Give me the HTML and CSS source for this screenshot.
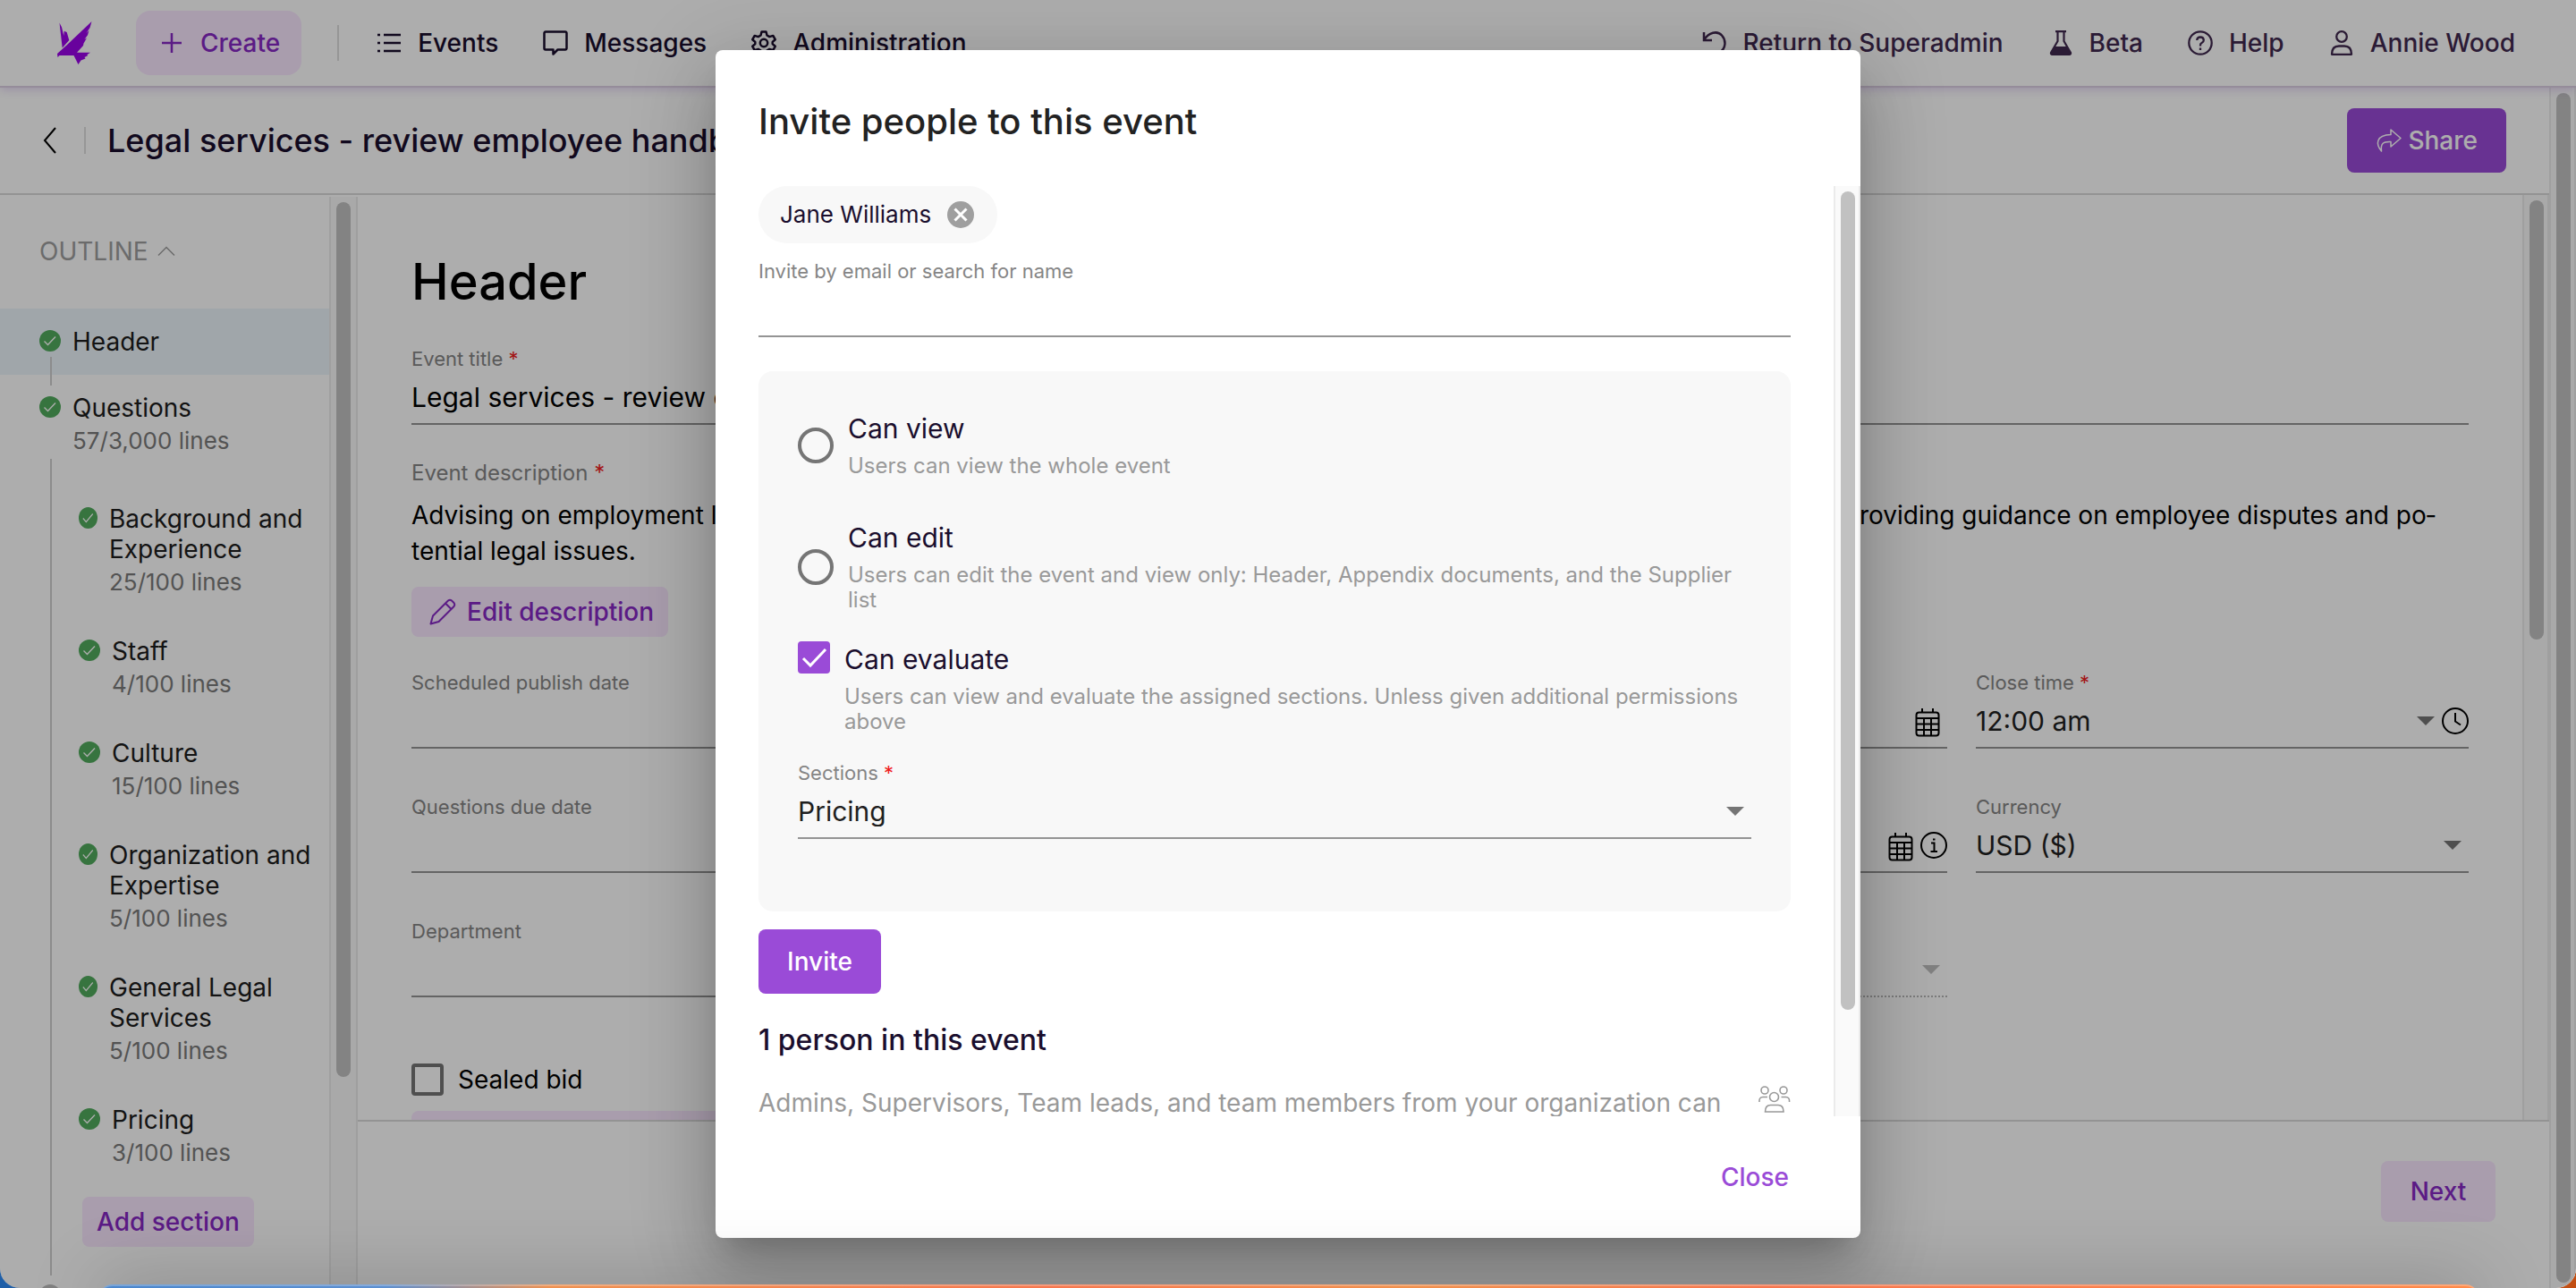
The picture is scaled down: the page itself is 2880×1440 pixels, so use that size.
FILE: index.html
```html
<!DOCTYPE html>
<html lang="en">
<head>
<meta charset="utf-8">
<title>Legal services - review employee handbook</title>
<link rel="stylesheet" href="styles.css">
</head>
<body>
<svg class="sprite" aria-hidden="true">
  <symbol id="tick" viewBox="0 0 24 24" preserveAspectRatio="none"><circle cx="12" cy="12" r="12" fill="#51ab5d"/><path d="M5.500 12.500l4 4L18 7.500" fill="none" stroke="#fff" stroke-width="1.400"/></symbol>
  <symbol id="calendar" viewBox="0 0 28 32"><g fill="none" stroke="currentColor" stroke-width="2"><rect x="1.500" y="4.500" width="25" height="26" rx="3"/><path d="M1.500 11h25M1.500 17.500h25M1.500 24h25M10 11v19M18 11v19M8 0v5M20 0v5"/></g></symbol>
</svg>

<div class="desktop">
  <div class="app">
    <header class="topbar">
      <a class="logo" href="#" aria-label="Home">
        <svg width="40" height="48" viewBox="0 0 40 48" fill="#9a04e8"><path d="M2.500 1.500L5 6.500 7.300 16 7.700 10.700 10.700 12 13.300 21 5.700 29.500Z"/><path d="M38.500 0L36.500 7 32.500 13 35.500 10 34 15.300 30.500 20 33 18.500 29.500 24.500 29 27 22 34.700H37L33.500 37 34 38.300 30.500 40 31.500 41.500 26.500 43.500 23.500 48 18.500 38H2.500L.500 40 0 36 10 27Z"/></svg>
      </a>
      <button class="create" type="button">
        <svg width="24" height="24" viewBox="0 0 24 24"><path d="M12 1v22M1 12h22" stroke="currentColor" stroke-width="2.500"/></svg>
        Create
      </button>
      <span class="rule"></span>
      <nav class="nav">
        <a href="#"><svg viewBox="0 0 28 28" fill="none" stroke="currentColor" stroke-width="2.500"><path d="M8 5h19M8 14h19M8 23h19M1 5h3M1 14h3M1 23h3"/></svg>Events</a>
        <a href="#"><svg viewBox="0 0 28 28" fill="none" stroke="currentColor" stroke-width="2.500" stroke-linejoin="round"><path d="M3 1.500h22a1.500 1.500 0 0 1 1.500 1.500v17a1.500 1.500 0 0 1-1.500 1.500h-8.500L11.500 26.500v-5H3A1.500 1.500 0 0 1 1.500 20V3A1.500 1.500 0 0 1 3 1.500z"/></svg>Messages</a>
        <a href="#"><svg viewBox="0 0 28 28" fill="none" stroke="currentColor" stroke-width="2.500" stroke-linejoin="round"><circle cx="14" cy="14" r="4.200"/><path d="M11.500 1.500h5l1 4 2.800 1.600 4-1.200 2.400 4.300-3 2.700v2.200l3 2.700-2.400 4.300-4-1.200-2.800 1.600-1 4h-5l-1-4-2.800-1.600-4 1.200-2.400-4.300 3-2.700v-2.200l-3-2.700 2.400-4.300 4 1.200 2.800-1.600z"/></svg>Administration</a>
      </nav>
      <nav class="nav nav-side">
        <a href="#"><svg viewBox="0 0 28 28" fill="none" stroke="currentColor" stroke-width="2.500"><path d="M2 2v9h9M2.500 10.500C7 2 17 0 22 5.500s5 15-3 19.500c-3 1.500-6 1.500-9 1"/></svg>Return to Superadmin</a>
        <a href="#"><svg viewBox="0 0 28 28"><path d="M8 1.200h12M10.500 1v11L3 25q-.500 1.800 1.500 1.800h19q2 0 1.500-1.800L17.500 12V1" fill="none" stroke="currentColor" stroke-width="2.200"/><path d="M7 18h14l4 8-1 1.500H4L3 26z" fill="currentColor"/></svg>Beta</a>
        <a href="#"><svg viewBox="0 0 28 28" fill="none" stroke="currentColor" stroke-width="2.300"><circle cx="14" cy="14" r="12.700"/><path d="M10.200 11q.300-3.500 3.800-3.500t3.800 3.300q0 2-2 3T14 16.800V17.500M14 19.500v2.500"/></svg>Help</a>
        <a href="#"><svg viewBox="0 0 28 28" fill="none" stroke="currentColor" stroke-width="2.300"><circle cx="14" cy="7" r="5.800"/><path d="M3 26.800q0-9.300 8-9.300h6q8 0 8 9.300z" stroke-linejoin="round"/></svg>Annie Wood</a>
      </nav>
    </header>

    <div class="below">
      <div class="page">
        <div class="titlebar">
          <button class="back" type="button" aria-label="Back"><svg width="16" height="30" viewBox="0 0 16 30"><path d="M14 1L2 15l12 14" fill="none" stroke="currentColor" stroke-width="2"/></svg></button>
          <h1>Legal services - review employee handbook</h1>
          <button class="share" type="button"><svg width="30" height="28" viewBox="0 0 30 28"><path d="M17 2l11 9.500L17 21v-5.500C8 15 5.500 18 6.500 26 0 18 0 8 17 7.500z" fill="none" stroke="currentColor" stroke-width="1.500" stroke-linejoin="round"/></svg>Share</button>
        </div>

        <div class="columns">
          <aside class="sidebar">
            <button class="outline" type="button">OUTLINE <svg width="20" height="12" viewBox="0 0 20 12"><path d="M1 10.500l9-9 9 9" fill="none" stroke="currentColor" stroke-width="1.500"/></svg></button>
            <ul class="tree">
              <li class="node current"><svg class="tick"><use href="#tick"/></svg><div>Header</div></li>
              <li class="node"><svg class="tick"><use href="#tick"/></svg><div>Questions<small>57/3,000 lines</small></div></li>
            </ul>
            <ul class="branch">
              <li class="node wraps"><svg class="tick"><use href="#tick"/></svg><div>Background and Experience<small>25/100 lines</small></div></li>
              <li class="node"><svg class="tick"><use href="#tick"/></svg><div>Staff<small>4/100 lines</small></div></li>
              <li class="node"><svg class="tick"><use href="#tick"/></svg><div>Culture<small>15/100 lines</small></div></li>
              <li class="node wraps"><svg class="tick"><use href="#tick"/></svg><div>Organization and Expertise<small>5/100 lines</small></div></li>
              <li class="node wraps"><svg class="tick"><use href="#tick"/></svg><div>General Legal Services<small>5/100 lines</small></div></li>
              <li class="node"><svg class="tick"><use href="#tick"/></svg><div>Pricing<small>3/100 lines</small></div></li>
              <li><button class="soft" type="button">Add section</button></li>
            </ul>
            <span class="pending"></span>
          </aside>
          <div class="track track-side"><div class="thumb"></div></div>

          <main class="content">
            <div class="scroller">
              <form class="form">
                <h2>Header</h2>
                <div class="field">
                  <label for="title">Event title <b>*</b></label>
                  <div class="control"><input id="title" type="text" value="Legal services - review employee handbook"></div>
                </div>
                <div class="description">
                  <h3>Event description <b>*</b></h3>
                  <p>Advising on employment law, drafting and reviewing key policies and the employee handbook, ensuring compliance, and providing guidance on employee disputes and po&shy;tential legal issues.</p>
                  <button class="soft edit" type="button"><svg width="30" height="30" viewBox="0 0 30 30" fill="none" stroke="currentColor" stroke-width="2" stroke-linejoin="round"><path d="M1.500 28.500l2.500-9L21 2.500q2-1.500 4 0l2.500 2.500q1.500 2 0 4l-17 17zM18 5.500l6.500 6.500"/></svg>Edit description</button>
                </div>
                <div class="grid">
                  <div class="field"><label for="f1">Scheduled publish date</label><div class="control"><input id="f1" type="text"></div></div>
                  <div class="field"><div class="blank"></div><div class="control"></div></div>
                  <div class="field"><div class="blank"></div><div class="control padded"><svg class="cal"><use href="#calendar"/></svg></div></div>
                  <div class="field"><label for="f4">Close time <b>*</b></label><div class="control"><select id="f4"><option>12:00 am</option></select><svg class="arrow" viewBox="0 0 20 10"><path d="M0 0h20L10 10z"/></svg><svg class="round" viewBox="0 0 30 30" fill="none" stroke="currentColor" stroke-width="2"><circle cx="15" cy="15" r="14"/><path d="M15 6v9.500l6 4"/></svg></div></div>

                  <div class="field"><label for="f5">Questions due date</label><div class="control"><input id="f5" type="text"></div></div>
                  <div class="field"><div class="blank"></div><div class="control"></div></div>
                  <div class="field"><div class="blank"></div><div class="control"><svg class="cal"><use href="#calendar"/></svg><svg class="round" viewBox="0 0 30 30" fill="none" stroke="currentColor" stroke-width="2"><circle cx="15" cy="15" r="14"/><path d="M12 12.500h3.500v9M11.500 22h7.500M14 8.500h2.500"/></svg></div></div>
                  <div class="field"><label for="f8">Currency</label><div class="control padded"><select id="f8"><option>USD ($)</option></select><svg class="arrow" viewBox="0 0 20 10"><path d="M0 0h20L10 10z"/></svg></div></div>

                  <div class="field"><label for="f9">Department</label><div class="control"><input id="f9" type="text"></div></div>
                  <div class="field"><div class="blank"></div><div class="control"></div></div>
                  <div class="field disabled"><div class="blank"></div><div class="control padded"><svg class="arrow" viewBox="0 0 20 10"><path d="M0 0h20L10 10z"/></svg></div></div>
                </div>
                <label class="sealed"><input type="checkbox">Sealed bid</label>
                <div class="notice"></div>
              </form>
              <div class="track track-form"><div class="thumb"></div></div>
            </div>
            <footer class="footer"><button class="soft next" type="button">Next</button></footer>
          </main>
        </div>
      </div>
      <div class="track track-page"><div class="thumb"></div></div>
    </div>

    <div class="overlay">
      <section class="modal" role="dialog" aria-labelledby="invite-title">
        <h2 id="invite-title">Invite people to this event</h2>
        <div class="modal-scroll">
          <div class="modal-body">
            <div class="chip">Jane Williams<button type="button" aria-label="Remove"><svg width="30" height="30" viewBox="0 0 30 30"><circle cx="15" cy="15" r="15" fill="#9f9f9f"/><path d="M8.500 8.500l13 13M21.500 8.500l-13 13" stroke="#fff" stroke-width="3"/></svg></button></div>
            <div class="field"><label for="who">Invite by email or search for name</label><div class="control"><input id="who" type="text"></div></div>
            <div class="rights">
              <label class="option"><input type="radio" name="access"><span>Can view<small>Users can view the whole event</small></span></label>
              <label class="option"><input type="radio" name="access"><span>Can edit<small>Users can edit the event and view only: Header, Appendix documents, and the Supplier list</small></span></label>
              <label class="option evaluate"><input type="checkbox" checked><span>Can evaluate<small>Users can view and evaluate the assigned sections. Unless given additional permissions above</small></span></label>
              <div class="field"><label for="sections">Sections <b>*</b></label><div class="control padded"><select id="sections"><option>Pricing</option></select><svg class="arrow" viewBox="0 0 20 10"><path d="M0 0h20L10 10z"/></svg></div></div>
            </div>
            <button class="invite" type="button">Invite</button>
            <h3>1 person in this event</h3>
            <div class="who">
              <p>Admins, Supervisors, Team leads, and team members from your organization can</p>
              <svg width="36" height="30" viewBox="0 0 36 30" fill="none" stroke="currentColor" stroke-width="1.600"><circle cx="7" cy="5" r="4"/><circle cx="28" cy="5" r="4"/><circle cx="17.500" cy="12.500" r="5"/><path d="M1 18q-.500-5.500 4-5.500h5M34.500 18q.500-5.500-4-5.500h-5M7.500 29q0-7.500 6-7.500h8.500q6 0 6 7.500z"/></svg>
            </div>
          </div>
          <div class="track track-modal"><div class="thumb"></div></div>
        </div>
        <div class="actions"><button type="button">Close</button></div>
      </section>
    </div>
  </div>
  <div class="dock"></div>
</div>
</body>
</html>
```
FILE: styles.css
```css
* { box-sizing: border-box; }
body { margin: 0; font-family: Inter, "Noto Sans", sans-serif; font-size: 28px; line-height: 34px; color: #000; }
h1, h2, h3, p, ul { margin: 0; padding: 0; font-weight: 400; }
ul { list-style: none; }
button, input, select { font: inherit; color: inherit; border: 0; background: none; padding: 0; margin: 0; }
a { color: inherit; text-decoration: none; }
svg { display: block; flex: none; }
b { color: #ef1c1c; font-weight: 400; }
.sprite { position: absolute; width: 0; height: 0; }

.desktop { position: relative; height: 100vh; overflow: hidden; background: linear-gradient(90deg, #1f5fa8, #c24e12); }
.app { position: relative; height: 100%; display: flex; flex-direction: column; background: #fff; border-radius: 0 0 22px 22px; overflow: hidden; }

/* top navigation */
.topbar { position: relative; z-index: 1; flex: none; display: flex; align-items: center; height: 98px; padding: 0 68px 0 64px; background: #fff; border-bottom: 2px solid #dccfe4; box-shadow: 0 2px 10px rgba(120, 50, 190, .22); font-weight: 500; color: #1a0e2d; }
.logo { margin-right: 48px; }
.create { display: flex; align-items: center; gap: 20px; height: 72px; padding: 0 24px 0 28px; border-radius: 16px; background: #f9e7ff; color: #8628c5; font-weight: 500; }
.rule { width: 2px; height: 40px; margin: 0 42px 0 40px; background: #dedede; }
.nav { display: flex; gap: 50px; }
.nav a { display: flex; align-items: center; gap: 18px; white-space: nowrap; }
.nav svg { width: 28px; height: 28px; }
.nav-side { margin-left: auto; color: #40294f; }

.below { flex: 1; min-height: 0; display: flex; }
.page { flex: 1; min-width: 0; display: flex; flex-direction: column; }
.titlebar { flex: none; display: flex; align-items: center; height: 120px; padding: 0 48px; border-bottom: 2px solid #d9d9d9; }
.back { height: 30px; padding-right: 30px; border-right: 2px solid #dedede; }
.titlebar h1 { flex: 1; margin-left: 24px; font-size: 36px; line-height: 44px; font-weight: 500; color: #1a0e2d; }
.share { display: flex; align-items: center; gap: 6px; height: 72px; padding: 0 32px; border-radius: 8px; background: #9a4bd7; color: #fff; font-weight: 500; }

/* drawn scrollbars */
.track { flex: none; width: 30px; padding: 6px; border: solid #ebebeb; border-width: 0 2px; background: #fafafa; }
.thumb { width: 16px; border-radius: 8px; background: #c1c1c1; }
.track-side { width: 32px; margin-top: 2px; }
.track-side .thumb { height: 81%; }
.track-form .thumb { height: 48%; }
.track-page .thumb { height: 100%; }
.track-modal .thumb { height: 89%; }

/* outline */
.columns { flex: 1; min-height: 0; display: flex; }
.sidebar { flex: none; width: 368px; overflow: hidden; color: #1c1c1c; }
.outline { display: flex; align-items: center; gap: 10px; margin: 46px 44px 47px; color: #9e9e9e; }
.node { display: flex; align-items: flex-start; gap: 13px; }
.tick { width: 24px; height: 24px; margin-top: 4px; }
.wraps .tick { width: 21px; }
.node small { display: block; margin-top: 2px; font-size: 26px; line-height: 36px; color: #7b7b7b; }
.tree { padding-bottom: 2px; }
.tree .node { padding: 20px 8px 0 44px; }
.tree .current { position: relative; height: 74px; background: #ecf5fb; }
.current::after { content: ""; position: absolute; left: 56px; top: 54px; width: 2px; height: 32px; background: #cfcfcf; }
.branch { display: flex; flex-direction: column; gap: 42px; margin-left: 56px; padding: 50px 14px 32px 30px; border-left: 2px solid #cfcfcf; }
.branch .soft { margin: -12px 0 0 4px; }
.soft { border-radius: 8px; background: #f9e7ff; color: #8628c5; font-weight: 500; height: 56px; padding: 0 16px; }
.pending { display: block; width: 24px; height: 24px; margin: 10px 0 0 44px; border-radius: 50%; background: #bdbdbd; }

/* form */
.content { flex: 1; min-width: 0; display: flex; flex-direction: column; }
.scroller { flex: 1; min-height: 0; display: flex; overflow: hidden; }
.form { flex: 1; min-width: 0; padding: 63px 60px 0; }
.form h2 { margin-bottom: 38px; font-size: 56px; line-height: 68px; font-weight: 500; }
.field label, .blank { display: block; height: 28px; font-size: 22px; line-height: 28px; color: #858585; }
.description h3 { font-size: 24px; line-height: 28px; color: #858585; }
.control { display: flex; align-items: center; gap: 8px; height: 60px; border-bottom: 2px solid #949494; font-size: 30px; }
.control input, .control select { flex: 1; min-width: 0; width: 100%; height: 100%; appearance: none; outline: 0; }
.control select { color: #1f1f1f; }
.control svg { margin-left: auto; }
.control svg + svg { margin-left: 0; }
.control select + svg { margin-left: 0; }
.arrow { width: 20px; height: 10px; fill: #757575; }
.cal { width: 28px; height: 32px; margin-top: 4px; }
.round { width: 30px; height: 30px; }
.padded { padding-right: 8px; }
.description { margin: 40px 0 37px; }
.description p { margin: 13px 0 20px; line-height: 40px; hyphens: manual; }
.edit { display: flex; align-items: center; gap: 12px; padding-left: 20px; }
.grid { display: grid; grid-template-columns: repeat(4, 1fr); gap: 51px 32px; }
.disabled .control { border-bottom-style: dotted; border-color: #b5b5b5; }
.disabled .arrow { fill: #bdbdbd; }
.sealed { display: flex; align-items: center; gap: 16px; margin: 74px 0 17px; height: 36px; }
.sealed input { appearance: none; width: 36px; height: 36px; border: 4px solid #757575; border-radius: 4px; }
.notice { width: 50%; height: 60px; border-radius: 8px; background: #f9e7ff; }
.footer { flex: none; display: flex; justify-content: flex-end; height: 188px; padding: 44px 60px; border-top: 2px solid #d9d9d9; }
.next { width: 128px; height: 68px; }

/* invite dialog */
.overlay { position: absolute; inset: 0; z-index: 2; display: flex; justify-content: center; padding: 56px; background: rgba(0, 0, 0, .32); }
.modal { display: flex; flex-direction: column; width: 1280px; height: 100%; border-radius: 8px; background: #fff; box-shadow: 0 22px 30px -14px rgba(0, 0, 0, .2), 0 48px 76px 6px rgba(0, 0, 0, .14), 0 18px 92px 16px rgba(0, 0, 0, .12); }
.modal h2 { flex: none; padding: 56px 48px 48px; font-size: 40px; line-height: 48px; font-weight: 500; color: #222; }
.modal-scroll { flex: 1; min-height: 0; display: flex; overflow: hidden; }
.modal-body { flex: 1; min-width: 0; padding: 0 48px; }
.chip { display: flex; align-items: center; gap: 18px; width: max-content; height: 64px; margin-bottom: 17px; padding: 0 26px 0 24px; border-radius: 32px; background: #f8f8f8; font-size: 26px; color: #1a0e2d; }
.rights { margin: 38px 0 20px; padding: 46px 44px 81px; border-radius: 16px; background: #f8f8f8; }
.option { display: flex; align-items: center; gap: 16px; margin-bottom: 48px; font-size: 30px; line-height: 36px; color: #1a0e2d; }
.option small { display: block; margin-top: 10px; font-size: 24px; line-height: 28px; color: #999; }
.option input { flex: none; appearance: none; width: 40px; height: 40px; border: 4px solid #757575; border-radius: 50%; }
.option + .evaluate { align-items: flex-start; margin: -16px 0 29px; }
.evaluate span { padding-top: 2px; }
.evaluate input { width: 36px; height: 36px; border: 0; border-radius: 4px; background: #9a4bd7 url("data:image/svg+xml,%3Csvg xmlns='http://www.w3.org/2000/svg' viewBox='0 0 36 36'%3E%3Cpath d='M6 19l8 8L31 9' fill='none' stroke='white' stroke-width='3'/%3E%3C/svg%3E"); }
.invite { display: block; height: 72px; padding: 0 32px; border-radius: 8px; background: #9a4bd7; color: #fff; font-weight: 500; }
.modal h3 { margin: 32px 0 31px; font-size: 32px; line-height: 40px; font-weight: 500; color: #1a0e2d; }
.who { display: flex; justify-content: space-between; color: #999; }
.who p { margin-top: 2px; }
.actions { flex: none; display: flex; justify-content: flex-end; align-items: center; height: 136px; padding-right: 80px; }
.actions button { color: #9a4bd7; font-weight: 500; }

.dock { position: absolute; z-index: 3; left: 110px; right: 108px; bottom: -36px; height: 40px; border-radius: 16px; border-top: 2px solid rgba(255, 255, 255, .25); background: linear-gradient(90deg, #4a86cc, #5c8fd0 12%, #ee9150 19%, #f6774e 40%, #f0904c 55%, #f6764e 70%, #ff8a48); background-clip: border-box; box-shadow: 0 0 80px rgba(0, 0, 0, .26); }
```
